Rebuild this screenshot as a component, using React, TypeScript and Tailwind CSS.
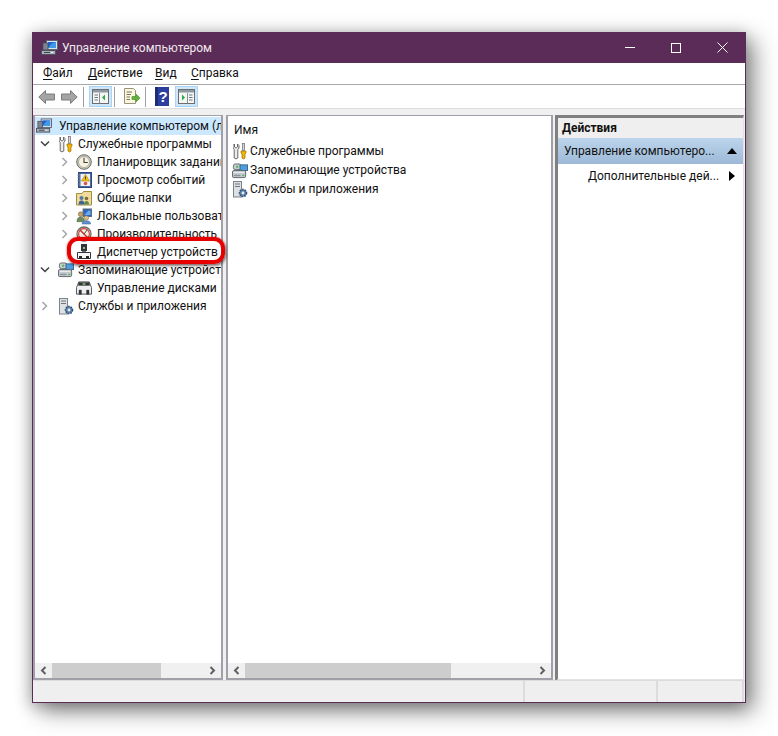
import React from 'react';

type IconProps = { className?: string };

function ComputerIcon({ className }: IconProps) {
  return (
    <svg className={className} viewBox="0 0 17 16" width="17" height="16">
      <rect x="5.5" y="0.5" width="11" height="9" fill="#dfe6ee" stroke="#5a6472" />
      <rect x="7" y="2" width="8" height="6" fill="#1f5fd0" />
      <path d="M7 8 L11 3 L15 2 L15 8 Z" fill="#3f9be8" />
      <rect x="2" y="3" width="5" height="7" fill="#7d8794" stroke="#454c57" strokeWidth="0.8" />
      <rect x="0.5" y="10.5" width="14" height="4" fill="#aab2bc" stroke="#4b525c" />
      <rect x="3" y="12" width="6" height="1" fill="#3d434c" />
      <rect x="10" y="12" width="2" height="1" fill="#f1f4f7" />
    </svg>
  );
}

function ToolsIcon({ className }: IconProps) {
  return (
    <svg className={className} viewBox="0 0 15 17" width="15" height="17">
      <path d="M1.5 1 L1.5 4 L3 5 L4.5 4 L4.5 1 L6 2.5 L6 5 L4.8 6.5 L4.8 15 Q3 16.8 1.2 15 L1.2 6.5 L0 5 L0 2.5 Z" fill="#ececec" stroke="#5c5c5c" strokeWidth="0.9" />
      <rect x="9.5" y="0.5" width="2" height="7" fill="#d4d4d4" stroke="#6a6a6a" strokeWidth="0.7" />
      <path d="M8 8 H13 V10 L12 11 V15 Q10.5 17 9 15 V11 L8 10 Z" fill="#f4b400" stroke="#96700a" strokeWidth="0.7" />
    </svg>
  );
}

function ClockIcon({ className }: IconProps) {
  return (
    <svg className={className} viewBox="0 0 16 16" width="16" height="16">
      <circle cx="8" cy="8" r="7.3" fill="#c8c8bd" stroke="#6d6d66" />
      <circle cx="8" cy="8" r="5.5" fill="#f6f2df" stroke="#a09e8e" strokeWidth="0.7" />
      <path d="M8 3.8 V8.5 H11.8" fill="none" stroke="#3f3f3f" strokeWidth="1.1" />
    </svg>
  );
}

function EventIcon({ className }: IconProps) {
  return (
    <svg className={className} viewBox="0 0 15 16" width="15" height="16">
      <rect x="1.5" y="0.5" width="13" height="15" fill="#4a6aa5" stroke="#2f4778" />
      <rect x="3.5" y="2" width="9.5" height="12" fill="#eef1f6" />
      <path d="M8.5 2.5 L12.5 9 H4.5 Z" fill="#f5c518" stroke="#a77e00" strokeWidth="0.6" />
      <rect x="8" y="4.5" width="1" height="3" fill="#4a3a00" />
      <circle cx="8.5" cy="11.5" r="1.8" fill="#d9534f" />
      <path d="M0.5 3 H3 M0.5 6 H3 M0.5 9 H3 M0.5 12 H3" stroke="#7a7f8a" strokeWidth="1.1" />
    </svg>
  );
}

function SharedFolderIcon({ className }: IconProps) {
  return (
    <svg className={className} viewBox="0 0 16 16" width="16" height="16">
      <path d="M0.5 3.5 H6 L7.5 1.5 H15.5 V15 H0.5 Z" fill="#efdc9a" stroke="#a58c3f" />
      <circle cx="5.5" cy="8" r="2" fill="#5579a8" />
      <path d="M2.5 14.5 Q2.5 10.5 5.5 10.5 Q8.5 10.5 8.5 14.5 Z" fill="#3f6394" />
      <circle cx="10.5" cy="8.5" r="1.8" fill="#7e6a3f" />
      <path d="M8 14.5 Q8 11 10.5 11 Q13 11 13 14.5 Z" fill="#5e8a4e" />
    </svg>
  );
}

function UsersIcon({ className }: IconProps) {
  return (
    <svg className={className} viewBox="0 0 17 17" width="17" height="17">
      <rect x="7.5" y="0.5" width="9" height="8" fill="#2f66c4" stroke="#5c6876" />
      <path d="M9 7 L13 2.5 L15.5 2 V7 Z" fill="#68aeea" />
      <circle cx="5" cy="6" r="2.5" fill="#c9a06a" stroke="#7d6138" strokeWidth="0.6" />
      <path d="M1 14 Q1 9 5 9 Q9 9 9 14 Z" fill="#6d8c5e" stroke="#4f6843" strokeWidth="0.6" />
      <circle cx="11" cy="10" r="2.4" fill="#e0bb8c" stroke="#8d7048" strokeWidth="0.6" />
      <path d="M6.5 16.5 Q6.5 13 11 13 Q15.5 13 15.5 16.5 Z" fill="#5e90cf" stroke="#3e6ba4" strokeWidth="0.6" />
    </svg>
  );
}

function PerfIcon({ className }: IconProps) {
  return (
    <svg className={className} viewBox="0 0 16 16" width="16" height="16">
      <circle cx="8" cy="8" r="7" fill="#f3efe9" stroke="#6e6a66" strokeWidth="1.3" />
      <circle cx="8" cy="8" r="5.4" fill="none" stroke="#c8372d" strokeWidth="1.1" />
      <path d="M4 4 L12 12" stroke="#c8372d" strokeWidth="1.6" />
      <path d="M8 8 L11 4" stroke="#444" strokeWidth="1" />
    </svg>
  );
}

function DeviceIcon({ className }: IconProps) {
  return (
    <svg className={className} viewBox="0 0 16 16" width="16" height="16">
      <rect x="5" y="0" width="6" height="7" fill="#33373c" />
      <rect x="7" y="3" width="2" height="2" fill="#7fc67f" />
      <rect x="6" y="7" width="4" height="2" fill="#6a6f76" />
      <path d="M1.5 8.5 H14.5 V14.5 H1.5 Z" fill="#f5f6f7" stroke="#33373c" />
      <rect x="3" y="12" width="3" height="3" fill="#26292d" />
      <rect x="10" y="12" width="3" height="3" fill="#26292d" />
    </svg>
  );
}

function StorageIcon({ className }: IconProps) {
  return (
    <svg className={className} viewBox="0 0 17 16" width="17" height="16">
      <rect x="1.5" y="0.5" width="8" height="6" rx="2" fill="#c9ced2" stroke="#616971" />
      <circle cx="5.5" cy="3.5" r="1.3" fill="#5cb85c" />
      <rect x="8.5" y="1.5" width="8" height="6" fill="#4d9ee0" stroke="#39638a" />
      <rect x="0.5" y="7.5" width="14" height="7.5" rx="1.5" fill="#c6cbd0" stroke="#5d646b" />
      <rect x="2" y="9" width="11" height="1" fill="#eef0f2" />
      <rect x="2" y="12" width="7" height="1.5" fill="#8c939a" />
      <rect x="11" y="12" width="2" height="1.5" fill="#4fb24f" />
    </svg>
  );
}

function DiskIcon({ className }: IconProps) {
  return (
    <svg className={className} viewBox="0 0 17 14" width="17" height="14">
      <path d="M3 0.5 H14 L16.5 6.5 V13.5 H0.5 V6.5 Z" fill="#eceef0" stroke="#4a4e54" />
      <rect x="2.5" y="1" width="12" height="3.5" fill="#2f3337" />
      <rect x="7" y="2" width="3" height="1.5" fill="#8fd07a" />
      <rect x="3" y="9" width="3" height="5" fill="#2f3337" />
      <rect x="11" y="9" width="3" height="5" fill="#2f3337" />
    </svg>
  );
}

function ServicesIcon({ className }: IconProps) {
  return (
    <svg className={className} viewBox="0 0 16 17" width="16" height="17">
      <rect x="1.5" y="0.5" width="8" height="15.5" fill="#dde1e5" stroke="#7b838a" />
      <rect x="3" y="2.5" width="5" height="1" fill="#6e757c" />
      <rect x="3" y="5" width="5" height="1" fill="#6e757c" />
      <circle cx="11" cy="12" r="3.6" fill="#5b7fa6" stroke="#2f4f74" strokeWidth="1.4" strokeDasharray="1.6 1" />
      <circle cx="11" cy="12" r="1.4" fill="#e9eef3" />
    </svg>
  );
}

function ChevronRight({ className }: IconProps) {
  return (
    <svg className={className} viewBox="0 0 8 10" width="8" height="10">
      <path d="M1.5 1 L5.5 5 L1.5 9" fill="none" stroke="#a6a6a6" strokeWidth="1.5" />
    </svg>
  );
}

function ChevronDown({ className }: IconProps) {
  return (
    <svg className={className} viewBox="0 0 10 8" width="10" height="8">
      <path d="M1 1.5 L5 5.5 L9 1.5" fill="none" stroke="#404040" strokeWidth="1.5" />
    </svg>
  );
}

function ArrowIcon({ dir }: { dir: 'left' | 'right' }) {
  return (
    <svg viewBox="0 0 17 14" width="17" height="14" className={dir === 'right' ? 'scale-x-[-1]' : ''}>
      <path d="M7.5 0.5 L0.8 7 L7.5 13.5 V10 H16.5 V4 H7.5 Z" fill="#a4a4a4" stroke="#7c7c7c" />
    </svg>
  );
}

function PaneToggleIcon({ side }: { side: 'left' | 'right' }) {
  return (
    <svg viewBox="0 0 17 15" width="17" height="15">
      <rect x="0.5" y="0.5" width="16" height="14" fill="#f4f6f4" stroke="#6e6e6e" />
      <rect x="1" y="1" width="15" height="2.5" fill="#8d9aa3" />
      {side === 'left' ? (
        <>
          <path d="M2.5 6 H6 M2.5 8.5 H6 M2.5 11 H6" stroke="#6c7a86" />
          <path d="M7.5 4 V14" stroke="#8e8e8e" />
          <path d="M13 5.5 L10 8.5 L13 11.5 Z" fill="#2fa84f" />
        </>
      ) : (
        <>
          <path d="M11 6 H14.5 M11 8.5 H14.5 M11 11 H14.5" stroke="#6c7a86" />
          <path d="M9.5 4 V14" stroke="#8e8e8e" />
          <path d="M4 5.5 L7 8.5 L4 11.5 Z" fill="#2fa84f" />
        </>
      )}
    </svg>
  );
}

function ExportIcon() {
  return (
    <svg viewBox="0 0 18 17" width="18" height="17">
      <path d="M1.5 0.5 H10.5 L12.5 2.5 V15.5 H1.5 Z" fill="#fbf6dc" stroke="#97927a" />
      <path d="M3.5 4 H9 M3.5 6.5 H8 M3.5 9 H7 M3.5 11.5 H7" stroke="#77746a" />
      <path d="M9 8.5 H13 V6 L17 10 L13 14 V11.5 H9 Z" fill="#63b23f" stroke="#4c9a2d" strokeWidth="0.7" />
    </svg>
  );
}

function HelpIcon() {
  return (
    <svg viewBox="0 0 14 19" width="14" height="19">
      <rect x="0" y="0" width="14" height="19" fill="#2c3f9e" />
      <rect x="0" y="0" width="3" height="19" fill="#1d2b78" />
      <text x="8" y="15" fontSize="15" fontWeight="700" fill="#ffffff" textAnchor="middle" fontFamily="Liberation Sans, sans-serif">?</text>
    </svg>
  );
}

function ScrollBar({ thumb }: { thumb: string }) {
  return (
    <div className="flex h-[15px] shrink-0 items-center bg-[#f0f0f0]">
      <div className="flex w-[17px] shrink-0 justify-center">
        <svg viewBox="0 0 7 9" width="7" height="9">
          <path d="M5.5 1 L2 4.5 L5.5 8" fill="none" stroke="#606060" strokeWidth="2" />
        </svg>
      </div>
      <div className="min-w-0 flex-1">
        <div className={`h-[15px] bg-[#cdcdcd] ${thumb}`} />
      </div>
      <div className="flex w-[17px] shrink-0 justify-center">
        <svg viewBox="0 0 7 9" width="7" height="9">
          <path d="M1.5 1 L5 4.5 L1.5 8" fill="none" stroke="#606060" strokeWidth="2" />
        </svg>
      </div>
    </div>
  );
}

function TreeRow({
  level,
  open,
  icon,
  label,
  selected,
}: {
  level: 0 | 1 | 2;
  open?: boolean;
  icon: React.ReactNode;
  label: string;
  selected?: boolean;
}) {
  const indent = level === 0 ? 'pl-[1px]' : level === 1 ? 'pl-[5px]' : 'pl-[25px]';
  const iconGap = level === 0 ? 'ml-0' : level === 1 ? 'ml-[8px]' : 'ml-[6px]';
  const textGap = level === 0 ? 'ml-[7px]' : level === 1 ? 'ml-[4px]' : 'ml-[5px]';
  return (
    <div className={`flex h-[18px] items-center overflow-hidden whitespace-nowrap ${indent} ${selected ? 'bg-[#cce8ff]' : ''}`}>
      {level > 0 && (
        <span className="flex w-[10px] shrink-0 justify-center">
          {open === undefined ? null : open ? <ChevronDown /> : <ChevronRight />}
        </span>
      )}
      <span className={`flex h-[18px] w-[16px] shrink-0 items-center justify-center ${iconGap}`}>{icon}</span>
      <span className={`shrink-0 text-[12px] leading-[18px] text-[#111] ${textGap}`}>{label}</span>
    </div>
  );
}

function ListRow({ icon, label }: { icon: React.ReactNode; label: string }) {
  return (
    <div className="flex h-[19px] items-center gap-[2px] whitespace-nowrap">
      <span className="flex h-[19px] w-[16px] shrink-0 items-center justify-center">{icon}</span>
      <span className="shrink-0 text-[12px] leading-[19px] text-[#111]">{label}</span>
    </div>
  );
}

function Menu({ first, rest, className }: { first: string; rest: string; className: string }) {
  return (
    <span className={className}>
      <span className="underline underline-offset-2">{first}</span>
      {rest}
    </span>
  );
}

function Separator() {
  return <div className="h-[20px] w-px bg-[#a0a0a0]" />;
}

export default function App() {
  return (
    <div className="h-[736px] w-[778px] overflow-hidden bg-white pl-[32px] pt-[32px] font-['Roboto','Noto_Sans',sans-serif]">
      <div className="flex h-[671px] w-[714px] flex-col border border-t-0 border-[#5b2c57] bg-white shadow-[8px_8px_22px_rgba(0,0,0,0.45),-2px_3px_14px_rgba(0,0,0,0.25)]">
        {/* Title bar */}
        <div className="-mx-px flex h-[31px] shrink-0 items-center bg-[#5b2c57] pl-[9px]">
          <ComputerIcon />
          <span className="ml-[4px] text-[12px] text-[#f0e9ef]">Управление компьютером</span>
          <div className="ml-auto flex h-full items-center">
            <div className="flex w-[47px] justify-center">
              <div className="h-px w-[10px] bg-white" />
            </div>
            <div className="flex w-[47px] justify-center pr-[1px]">
              <div className="h-[10px] w-[10px] border border-white" />
            </div>
            <div className="flex w-[46px] justify-center pr-[1px]">
              <svg viewBox="0 0 11 11" width="11" height="11">
                <path d="M0.5 0.5 L10.5 10.5 M10.5 0.5 L0.5 10.5" stroke="#ffffff" strokeWidth="1" />
              </svg>
            </div>
          </div>
        </div>

        {/* Menu bar */}
        <div className="flex h-[22px] shrink-0 items-center border-b border-[#a9a9a9] pb-[1px] pl-[10px] text-[12px] text-[#111]">
          <Menu first="Ф" rest="айл" className="w-[45px]" />
          <Menu first="Д" rest="ействие" className="w-[67px]" />
          <Menu first="В" rest="ид" className="w-[36px]" />
          <Menu first="С" rest="правка" className="" />
        </div>

        {/* Toolbar */}
        <div className="flex h-[24px] shrink-0 items-center border-b border-[#dcdcdc] pl-[5px]">
          <ArrowIcon dir="left" />
          <div className="w-[6px]" />
          <ArrowIcon dir="right" />
          <div className="w-[5px]" />
          <Separator />
          <div className="ml-[5px] flex h-[21px] w-[23px] items-center justify-center border border-[#a8d4f5] bg-[#cfe6f8]">
            <PaneToggleIcon side="left" />
          </div>
          <div className="ml-[2px]">
            <Separator />
          </div>
          <div className="ml-[8px]">
            <ExportIcon />
          </div>
          <div className="ml-[4px]">
            <Separator />
          </div>
          <div className="ml-[9px]">
            <HelpIcon />
          </div>
          <div className="ml-[6px] flex h-[21px] w-[23px] items-center justify-center border border-[#a8d4f5] bg-[#cfe6f8]">
            <PaneToggleIcon side="right" />
          </div>
        </div>

        {/* Panes */}
        <div className="flex min-h-0 flex-1 bg-[#f0f0f0] pt-[6px]">
          <div className="relative flex h-[565px] w-[190px] shrink-0 flex-col border-2 border-t border-[#a0a0a8] bg-white">
            <div className="min-h-0 flex-1 overflow-hidden pt-[1px]">
              <TreeRow level={0} selected icon={<ComputerIcon />} label="Управление компьютером (локальным)" />
              <TreeRow level={1} open icon={<ToolsIcon />} label="Служебные программы" />
              <TreeRow level={2} open={false} icon={<ClockIcon />} label="Планировщик заданий" />
              <TreeRow level={2} open={false} icon={<EventIcon />} label="Просмотр событий" />
              <TreeRow level={2} open={false} icon={<SharedFolderIcon />} label="Общие папки" />
              <TreeRow level={2} open={false} icon={<UsersIcon />} label="Локальные пользователи" />
              <TreeRow level={2} open={false} icon={<PerfIcon />} label="Производительность" />
              <TreeRow level={2} icon={<DeviceIcon />} label="Диспетчер устройств" />
              <TreeRow level={1} open icon={<StorageIcon />} label="Запоминающие устройства" />
              <TreeRow level={2} icon={<DiskIcon />} label="Управление дисками" />
              <TreeRow level={1} open={false} icon={<ServicesIcon />} label="Службы и приложения" />
            </div>
            <ScrollBar thumb="w-[109px]" />
            {/* Red callout over the tree */}
            <div className="absolute left-[32px] top-[121px] h-[27px] w-[158px] rounded-[11px] border-[4px] border-[#e60000] shadow-[0_0_2px_rgba(200,0,0,0.6),1px_2px_3px_rgba(0,0,0,0.5)]" />
          </div>

          <div className="ml-[3px] flex h-[565px] w-[327px] shrink-0 flex-col border-2 border-t border-[#a0a0a8] bg-white">
            <div className="min-h-0 flex-1 overflow-hidden pl-[4px] pt-[5px]">
              <div className="ml-[2px] h-[18px] text-[12px] leading-[18px] text-[#111]">Имя</div>
              <div className="mt-[3px]">
                <ListRow icon={<ToolsIcon />} label="Служебные программы" />
                <ListRow icon={<StorageIcon />} label="Запоминающие устройства" />
                <ListRow icon={<ServicesIcon />} label="Службы и приложения" />
              </div>
            </div>
            <ScrollBar thumb="w-[206px]" />
          </div>

          <div className="ml-[2px] flex h-[566px] w-[189px] shrink-0 flex-col border-l-[3px] border-t-[3px] border-r border-b-2 border-[#e2e2e2] border-l-[#808080] border-t-[#808080] bg-white whitespace-nowrap">
            <div className="flex h-[20px] shrink-0 items-center bg-[#efefef] pl-[4px] text-[12px] font-bold text-[#111]">
              Действия
            </div>
            <div className="flex h-[26px] shrink-0 items-center bg-gradient-to-b from-[#bcd5ec] to-[#9db9d7] pl-[6px] text-[12px] text-[#111]">
              <span>Управление компьютеро...</span>
              <svg className="ml-auto mr-[6px]" viewBox="0 0 10 6" width="10" height="6">
                <path d="M5 0 L10 6 H0 Z" fill="#000" />
              </svg>
            </div>
            <div className="flex h-[24px] shrink-0 items-center pl-[30px] text-[12px] text-[#111]">
              <span>Дополнительные дей...</span>
              <svg className="ml-auto mr-[8px]" viewBox="0 0 6 10" width="6" height="10">
                <path d="M0 0 L6 5 L0 10 Z" fill="#000" />
              </svg>
            </div>
          </div>
        </div>

        {/* Status bar */}
        <div className="flex h-[22px] shrink-0 border-t border-[#dcdcdc] bg-[#efefef]">
          <div className="w-[492px] border-r-2 border-[#dcdcdc]" />
          <div className="w-[133px] border-r-2 border-[#dcdcdc]" />
          <div className="w-[86px] border-r-2 border-[#dcdcdc]" />
        </div>
      </div>
    </div>
  );
}
